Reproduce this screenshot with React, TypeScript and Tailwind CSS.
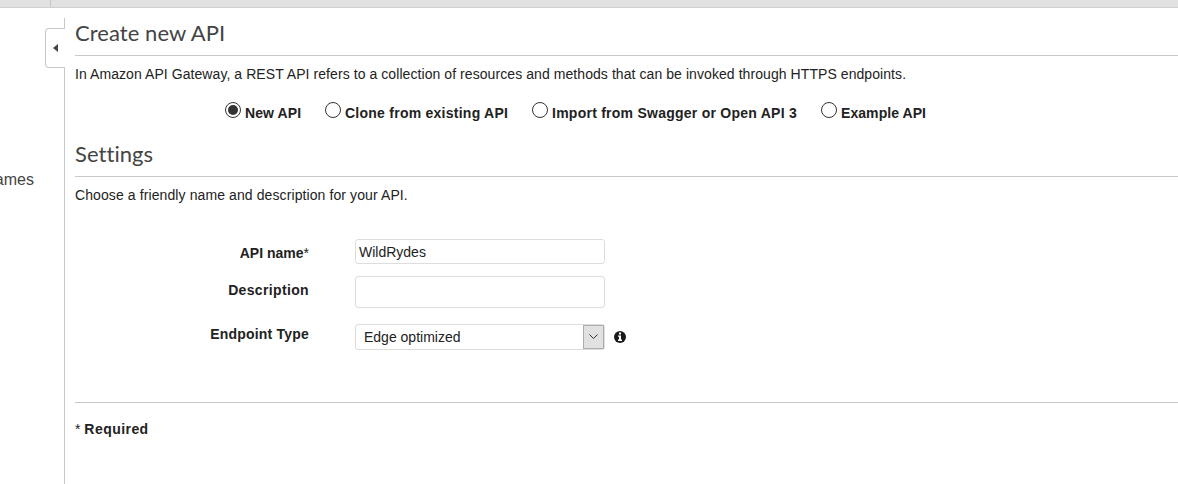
import { useState } from "react";
import type { ReactNode } from "react";

const sources = [
  { id: "new", label: "New API", width: "w-[100px]", tracking: "tracking-[0.1px]" },
  { id: "clone", label: "Clone from existing API", width: "w-[207px]", tracking: "tracking-[0.25px]" },
  { id: "import", label: "Import from Swagger or Open API 3", width: "w-[289px]", tracking: "tracking-[0.25px]" },
  { id: "example", label: "Example API", width: "w-[120px]", tracking: "tracking-[0.07px]" },
];

function Heading({ children }: { children: ReactNode }) {
  return (
    <h2 className="h-[38px] border-b border-[#c8c8c8] font-[Lato,sans-serif] text-[22px] leading-[30px] tracking-[0.06px] text-[#444] [font-variant-ligatures:none]">
      {children}
    </h2>
  );
}

function Label({ children, className }: { children: ReactNode; className: string }) {
  return <div className={"w-[234px] shrink-0 text-right font-bold leading-5 " + className}>{children}</div>;
}

function Sidebar() {
  return (
    <aside className="flex w-[65px] shrink-0 flex-col items-end overflow-hidden pt-[10px]">
      <div className="h-[10px] w-px bg-[#c8c8c8]" />
      <button className="flex h-10 w-5 items-center rounded-l-[4px] border border-r-0 border-[#c8c8c8] pl-[7px]">
        <svg width="5" height="8" viewBox="0 0 5 8" fill="#444">
          <path d="M5 0v8L0 4z" />
        </svg>
      </button>
      <div className="flex w-full flex-1 justify-end border-r border-[#c8c8c8]">
        <span className="mt-[102px] mr-[30px] text-base leading-5 text-[#444]">names</span>
      </div>
    </aside>
  );
}

export default function App() {
  const [source, setSource] = useState("new");
  return (
    <div className="flex h-[484px] w-full flex-col overflow-hidden bg-white font-['Liberation_Sans',Arial,sans-serif] text-sm text-[#222]">
      <header className="flex h-2 shrink-0 border-b border-[#cfcfcf] bg-[#e1e1e1]">
        <div className="w-[51px] border-r border-[#c4c4c4]" />
      </header>
      <div className="flex min-h-0 flex-1">
        <Sidebar />
        <main className="min-w-0 flex-1 pt-[10px] pl-[10px]">
          <Heading>Create new API</Heading>
          <p className="mt-2 leading-5 tracking-[0.072px]">
            In Amazon API Gateway, a REST API refers to a collection of resources and methods that can be invoked
            through HTTPS endpoints.
          </p>
          <div className="mt-[18px] flex pl-[150px]">
            {sources.map((s) => (
              <label key={s.id} className={"flex shrink-0 gap-1 " + s.width}>
                <input
                  type="radio"
                  className="sr-only"
                  checked={source === s.id}
                  onChange={() => setSource(s.id)}
                />
                <svg className="shrink-0" width="16" height="16" viewBox="0 0 16 16">
                  <circle cx="8" cy="8" r="7.5" fill="#fff" stroke="#333" />
                  {source === s.id && <circle cx="8" cy="8" r="5" fill="#333" />}
                </svg>
                <span className={"mt-px font-bold leading-5 whitespace-nowrap " + s.tracking}>{s.label}</span>
              </label>
            ))}
          </div>
          <div className="mt-4">
            <Heading>Settings</Heading>
          </div>
          <p className="mt-2 leading-5 tracking-[0.1px]">Choose a friendly name and description for your API.</p>
          <div className="mt-[34px] flex">
            <Label className="pt-1">
              API name<span className="font-normal">*</span>
            </Label>
            <input
              className="ml-[46px] h-[25px] w-[250px] rounded-[3px] border border-[#ddd] px-[3px]"
              defaultValue="WildRydes"
            />
          </div>
          <div className="mt-3 flex">
            <Label className="pt-1 tracking-[0.35px]">Description</Label>
            <input className="ml-[46px] h-8 w-[250px] rounded-[3px] border border-[#ddd] px-[3px]" />
          </div>
          <div className="mt-4 flex">
            <Label className="tracking-[0.2px]">Endpoint Type</Label>
            <div className="ml-[46px] flex h-[26px] w-[250px] rounded-[3px] border border-[#ddd]">
              <span className="flex-1 pl-2 leading-6">Edge optimized</span>
              <span className="flex w-[21px] items-center justify-center border border-[#adadad] bg-[#e1e1e1]">
                <svg width="9" height="6" viewBox="0 0 9 6" fill="none" stroke="#333">
                  <path d="M.5.5l4 4 4-4" />
                </svg>
              </span>
            </div>
            <svg className="mt-[7px] ml-[9px]" width="12" height="12" viewBox="0 0 12 12">
              <circle cx="6" cy="6" r="6" fill="#1a1a1a" />
              <path d="M5 1.6h2v1.8H5zM4 4.4h3v4.2h1V10H4V8.6h1V5.8H4z" fill="#fff" />
            </svg>
          </div>
          <div className="mt-[52px] border-t border-[#c8c8c8] pt-4 leading-5">
            * <span className="font-bold tracking-[0.45px]">Required</span>
          </div>
        </main>
      </div>
    </div>
  );
}
